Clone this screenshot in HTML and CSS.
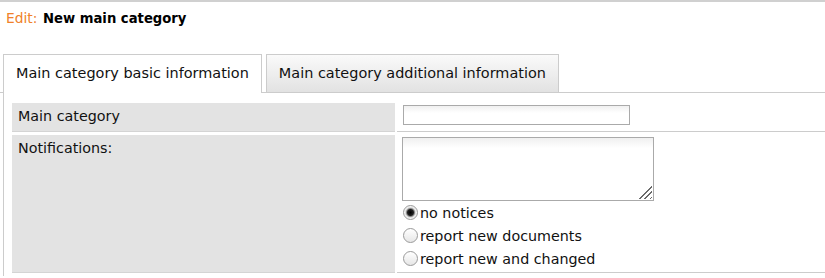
FILE: index.html
```html
<!DOCTYPE html>
<html lang="en">
<head>
  <meta charset="UTF-8">
  <title>Edit: New main category</title>
  <link rel="stylesheet" href="styles.css">
</head>
<body>

<!-- title -->
<h1 class="page-title"><span class="edit">Edit:</span> New main category</h1>

<!-- tabs -->
<ul class="tabs">
  <li class="tab active">Main category basic information</li>
  <li class="tab">Main category additional information</li>
</ul>

<!-- form panel -->
<div class="panel">
  <div class="form">
    <div class="label">Main category</div>
    <div class="value">
      <input type="text" class="text-input">
    </div>

    <div class="label">Notifications:</div>
    <div class="value">
      <div class="area-wrap">
        <textarea class="text-area"></textarea>
        <span class="grip"></span>
      </div>
      <label class="radio-row"><input type="radio" name="notify" checked> no notices</label>
      <label class="radio-row"><input type="radio" name="notify"> report new documents</label>
      <label class="radio-row"><input type="radio" name="notify"> report new and changed</label>
    </div>
  </div>
</div>

</body>
</html>
```

FILE: styles.css
```css
/* base */
body {
  margin: 0;
  font-family: "DejaVu Sans", Verdana, sans-serif;
  font-size: 14.3px;
  color: #111;
  background: #fff;
  border-top: 2px solid #d0d0d0;
}

/* title */
.page-title {
  margin: 8px 0 0 6px;
  height: 16px;
  font-size: 13.2px;
  line-height: 16px;
  font-weight: bold;
  color: #000;
}
.page-title .edit {
  font-weight: normal;
  font-size: 13.8px;
  margin-right: 1px;
  color: #f0812a;
}

/* tabs */
.tabs {
  list-style: none;
  display: flex;
  gap: 4px;
  margin: 28px 0 0 0;
  padding: 0 0 0 3px;
  border-bottom: 1px solid #ccc;
  font-size: 14.45px;
}
.tab {
  height: 37px;
  line-height: 36px;
  padding: 0 12px;
  border: 1px solid #ccc;
  border-bottom: none;
  background: linear-gradient(#fafafa, #e2e2e2);
  color: #111;
}
.tab.active {
  background: #fff;
  height: 38px;
  margin-bottom: -1px;
}

/* panel */
.panel {
  margin-left: 3px;
  border-left: 1px solid #ccc;
  padding: 10px 0 3px 8px;
}
.form {
  display: grid;
  grid-template-columns: 383px 1fr;
  column-gap: 2px;
  row-gap: 3px;
}
.label {
  background: #e3e3e3;
  border-bottom: 1px solid #d4d4d4;
  padding: 5px 6px;
  line-height: 17px;
}
.value {
  border-bottom: 1px solid #ccc;
  padding: 2px 0 2px 6px;
}

/* inputs */
.text-input {
  display: block;
  box-sizing: border-box;
  width: 227px;
  height: 20px;
  margin: 0 0 4px 0;
  border: 1px solid #aaa;
  background: linear-gradient(#f0f0f0, #fff 7px);
  font: inherit;
}
.area-wrap {
  position: relative;
  width: 252px;
  margin-left: -1px;
}
.text-area {
  display: block;
  box-sizing: border-box;
  width: 252px;
  height: 64px;
  margin: 0;
  border: 1px solid #aaa;
  background: linear-gradient(#f0f0f0, #fff 10px);
  font: inherit;
  resize: none;
}
/* resize grip drawn over the corner */
.grip {
  position: absolute;
  right: 2px;
  bottom: 2px;
  width: 14px;
  height: 14px;
  background: repeating-linear-gradient(135deg, transparent 0 2.5px, #6a6a6a 2.5px 3.8px);
  clip-path: polygon(100% 0, 100% 100%, 0 100%);
}
.radio-row {
  display: flex;
  align-items: center;
  height: 23px;
}
.radio-row input {
  appearance: none;
  -webkit-appearance: none;
  width: 15px;
  height: 15px;
  margin: 0 2px 0 0;
  border: 1px solid #9a9a9a;
  border-radius: 50%;
  background: linear-gradient(#fff, #e6e6e6);
}
.radio-row input:checked {
  background: radial-gradient(circle, #000 0, #222 3px, #888 4px, #ddd 5px, #f4f4f4 6px);
}
```
